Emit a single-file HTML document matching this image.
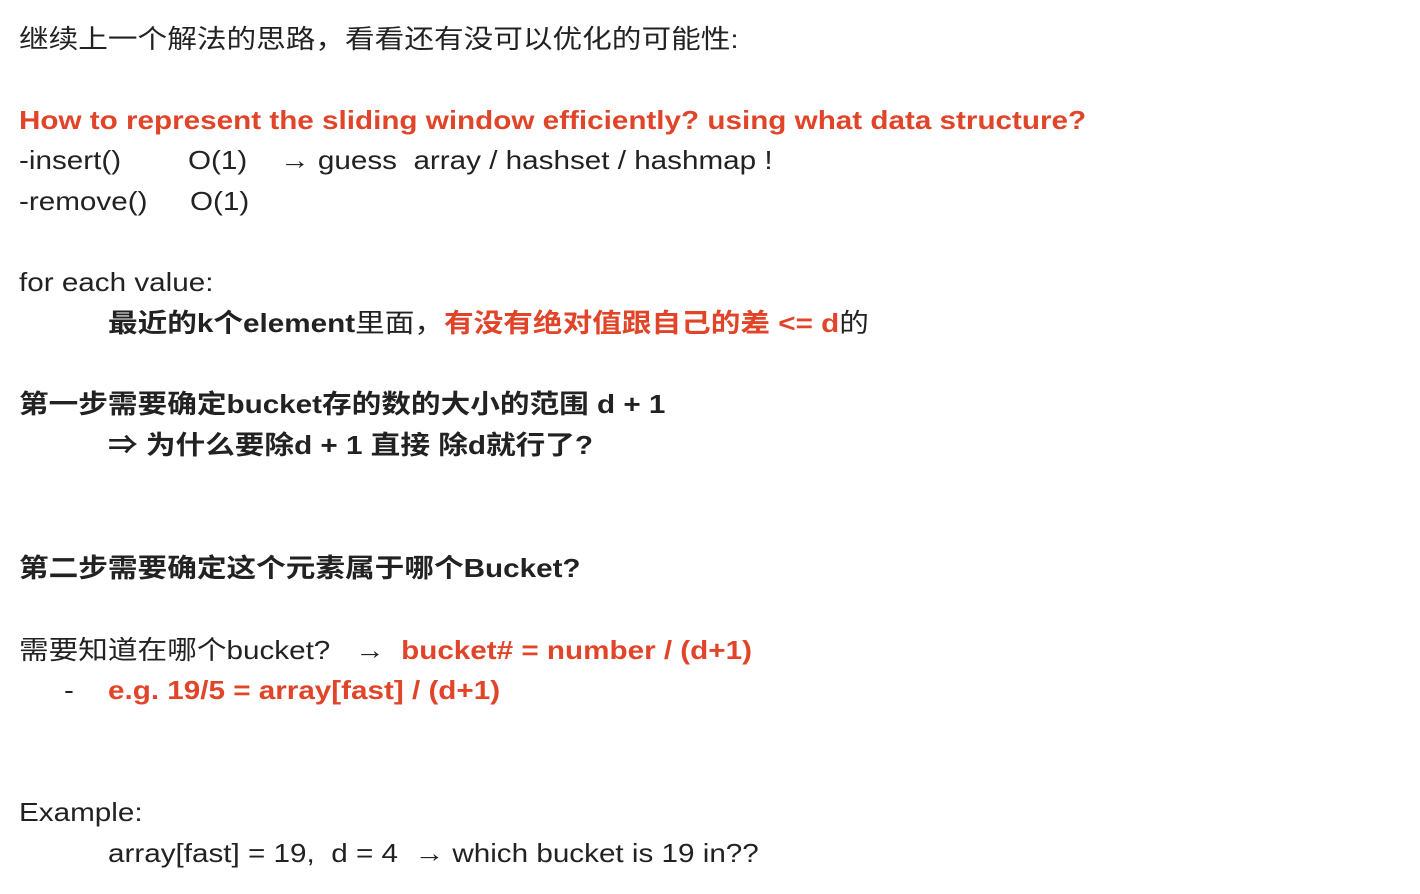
<!DOCTYPE html>
<html><head><meta charset="utf-8"><style>
body{margin:0;width:1420px;height:894px;background:#fff;position:relative;overflow:hidden;font-family:"Liberation Sans","Noto Sans CJK SC",sans-serif;font-size:26px;color:#222;}
.l{position:absolute;white-space:nowrap;line-height:30px;height:30px;transform:scaleX(1.14);transform-origin:0 50%;margin-top:1px;}
.r{color:#e0452a;}
b{font-weight:bold;}
</style></head><body>
<div class="l" style="left:19px;top:23px">继续上一个解法的思路，看看还有没可以优化的可能性:</div>
<div class="l r" style="left:19px;top:104px"><b>How to represent the sliding window efficiently? using what data structure?</b></div>
<div class="l" style="left:19px;top:144px">-insert()</div>
<div class="l" style="left:188px;top:144px">O(1)</div>
<div class="l" style="left:280px;top:144px">→ guess&nbsp; array / hashset / hashmap !</div>
<div class="l" style="left:19px;top:185px">-remove()</div>
<div class="l" style="left:190px;top:185px">O(1)</div>
<div class="l" style="left:19px;top:266px">for each value:</div>
<div class="l" style="left:108px;top:307px"><b>最近的k个element</b>里面，<b class="r">有没有绝对值跟自己的差 &lt;= d</b>的</div>
<div class="l" style="left:19px;top:388px"><b>第一步需要确定bucket存的数的大小的范围 d + 1</b></div>
<div class="l" style="left:108px;top:429px"><b>⇒ 为什么要除d + 1 直接 除d就行了?</b></div>
<div class="l" style="left:19px;top:552px"><b>第二步需要确定这个元素属于哪个Bucket?</b></div>
<div class="l" style="left:19px;top:634px">需要知道在哪个bucket?&nbsp;&nbsp; → &nbsp;<b class="r">bucket# = number / (d+1)</b></div>
<div class="l" style="left:64px;top:674px">-</div>
<div class="l r" style="left:108px;top:674px"><b>e.g. 19/5 = array[fast] / (d+1)</b></div>
<div class="l" style="left:19px;top:796px">Example:</div>
<div class="l" style="left:108px;top:837px">array[fast] = 19,&nbsp; d = 4&nbsp; → which bucket is 19 in??</div>
</body></html>
